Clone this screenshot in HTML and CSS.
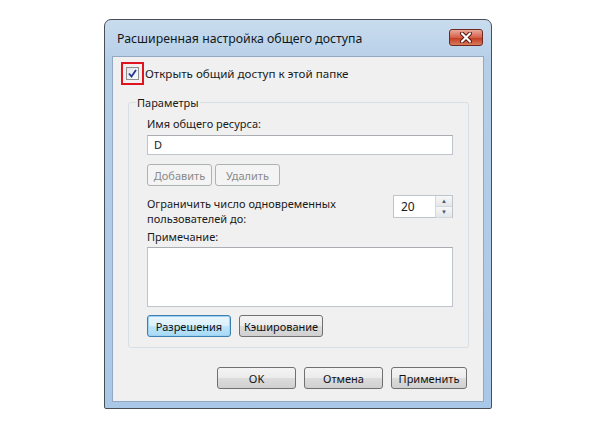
FILE: index.html
```html
<!DOCTYPE html>
<html lang="ru">
<head>
    <meta charset="UTF-8">
    <title>Расширенная настройка общего доступа</title>
    <link rel="stylesheet" href="styles.css">
</head>
<body>
    <div class="window">
        <div class="titlebar">
            <span class="title">Расширенная настройка общего доступа</span>
            <button class="close" type="button">
                <svg width="14" height="11" viewBox="0 0 14 11">
                    <path d="M3 1.5 L11 9.5 M11 1.5 L3 9.5" stroke="#5a1208" stroke-width="4" stroke-linecap="round"/>
                    <path d="M3 1.5 L11 9.5 M11 1.5 L3 9.5" stroke="#fff" stroke-width="2.2" stroke-linecap="round"/>
                </svg>
            </button>
        </div>

        <div class="client">
            <div class="share-row">
                <span class="highlight">
                    <span class="check">
                        <svg width="9" height="9" viewBox="0 0 9 9">
                            <path d="M1 4.5 L3.5 7.5 L8 1" fill="none" stroke="#1f3a93" stroke-width="1.8"/>
                        </svg>
                    </span>
                </span>
                <span class="share-label">Открыть общий доступ к этой папке</span>
            </div>

            <fieldset class="group">
                <legend>Параметры</legend>

                <div class="label">Имя общего ресурса:</div>
                <div class="field">D</div>

                <div class="btn-row">
                    <button class="btn small disabled" type="button">Добавить</button>
                    <button class="btn small disabled" type="button">Удалить</button>
                </div>

                <div class="limit-row">
                    <div class="limit-text">Ограничить число одновременных<br>пользователей до:</div>
                    <div class="spinner">
                        <span class="spin-value">20</span>
                        <span class="spin-arrows">
                            <span class="arrow">&#9650;</span>
                            <span class="arrow">&#9660;</span>
                        </span>
                    </div>
                </div>

                <div class="label note-label">Примечание:</div>
                <div class="note"></div>

                <div class="btn-row perm-row">
                    <button class="btn medium default" type="button">Разрешения</button>
                    <button class="btn medium" type="button">Кэширование</button>
                </div>
            </fieldset>

            <div class="footer">
                <button class="btn wide" type="button">OK</button>
                <button class="btn wide" type="button">Отмена</button>
                <button class="btn apply" type="button">Применить</button>
            </div>
        </div>
    </div>
</body>
</html>
```

FILE: styles.css
```css
body {
    margin: 0;
    background: #fff;
    font-family: "Noto Sans", "Open Sans", sans-serif;
    font-size: 11px;
    color: #1a1a1a;
}
.window {
    margin: 19px 0 0 104px;
    width: 388px;
    height: 390px;
    border: 1px solid #4a4f57;
    border-radius: 7px 7px 2px 2px;
    background: linear-gradient(#c9dcee, #b6cfe8 40px, #a9c8e8);
    padding: 0 7px 6px 7px;
    box-sizing: border-box;
    display: flex;
    flex-direction: column;
}
.titlebar {
    height: 36px;
    display: flex;
    align-items: center;
    justify-content: space-between;
    padding-left: 5px;
    flex-shrink: 0;
}
.title {
    font-size: 12.3px;
    color: #101820;
}
.close {
    width: 34px;
    height: 17px;
    margin-top: -2px;
    margin-right: 1px;
    border: 1px solid #6e2a20;
    border-radius: 3px;
    background: linear-gradient(#e9a99c, #d5604a 50%, #c2391f 51%, #d97a5a);
    display: flex;
    align-items: center;
    justify-content: center;
    padding: 0;
}
.client {
    flex: 1;
    background: #f0f0f0;
    border: 1px solid #93a9c2;
    padding: 4px 14px 0 8px;
    display: flex;
    flex-direction: column;
}
.share-row {
    display: flex;
    align-items: center;
    height: 24px;
}
.highlight {
    width: 19px;
    height: 19px;
    border: 2px solid #e0141e;
    display: flex;
    align-items: center;
    justify-content: center;
}
.check {
    width: 11px;
    height: 11px;
    border: 1px solid #8e8f8f;
    background: linear-gradient(135deg, #dfe3ea, #fbfcfd);
    display: flex;
    align-items: center;
    justify-content: center;
}
.share-label {
    margin-left: 1px;
    font-size: 11.6px;
}
.group {
    margin: 10px 0 0 7px;
    padding: 6px 15px 10px 18px;
    border: 1px solid #d5dfe5;
    border-radius: 3px;
    min-width: 0;
}
.group legend {
    padding: 0 1px;
    margin-left: -11px;
}
.label {
    height: 16px;
    line-height: 16px;
}
.field {
    margin-top: 3px;
    height: 20px;
    border: 1px solid #bfc5cc;
    border-top-color: #abadb3;
    background: #fff;
    box-sizing: border-box;
    padding: 0 6px;
    line-height: 18px;
}
.btn-row {
    display: flex;
    gap: 3px;
    margin-top: 9px;
}
.btn {
    font-family: inherit;
    font-size: 11px;
    color: #111;
    height: 22px;
    padding: 0 4px;
    border: 1px solid #707070;
    border-radius: 3px;
    background: linear-gradient(#f4f4f4, #ebebeb 50%, #dcdcdc 51%, #d0d0d0);
}
.btn.small {
    width: 65px;
}
.btn.medium {
    width: 84px;
}
.btn.disabled {
    color: #8a8a8a;
    border-color: #adb2b5;
    background: #f4f4f4;
}
.btn.default {
    border-color: #3c7fb1;
    background: linear-gradient(#eaf6fd, #d9f0fc 50%, #bee6fd 51%, #a7d9f5);
    box-shadow: inset 0 0 0 1px #9ed2f0;
}
.limit-row {
    display: flex;
    justify-content: space-between;
    margin-top: 9px;
}
.limit-text {
    line-height: 15px;
    padding-top: 1px;
}
.spinner {
    width: 60px;
    height: 23px;
    border: 1px solid #bfc5cc;
    background: #fff;
    box-sizing: border-box;
    display: flex;
    justify-content: space-between;
}
.spin-value {
    padding-left: 7px;
    line-height: 21px;
    font-size: 12px;
}
.spin-arrows {
    width: 16px;
    display: flex;
    flex-direction: column;
    border-left: 1px solid #d4d7db;
}
.arrow {
    flex: 1;
    font-size: 6px;
    line-height: 10px;
    text-align: center;
    color: #4a5866;
    background: linear-gradient(#f6f7f8, #e4e7ea);
    border-bottom: 1px solid #d4d7db;
}
.note-label {
    margin-top: 3px;
}
.note {
    margin-top: 2px;
    height: 60px;
    box-sizing: border-box;
    border: 1px solid #bfc5cc;
    border-top-color: #abadb3;
    background: #fff;
}
.perm-row {
    margin-top: 8px;
    gap: 8px;
}
.footer {
    display: flex;
    justify-content: flex-end;
    gap: 8px;
    margin-top: 19px;
    padding-right: 2px;
}
.btn.wide {
    width: 79px;
}
.btn.apply {
    width: 76px;
}
```
